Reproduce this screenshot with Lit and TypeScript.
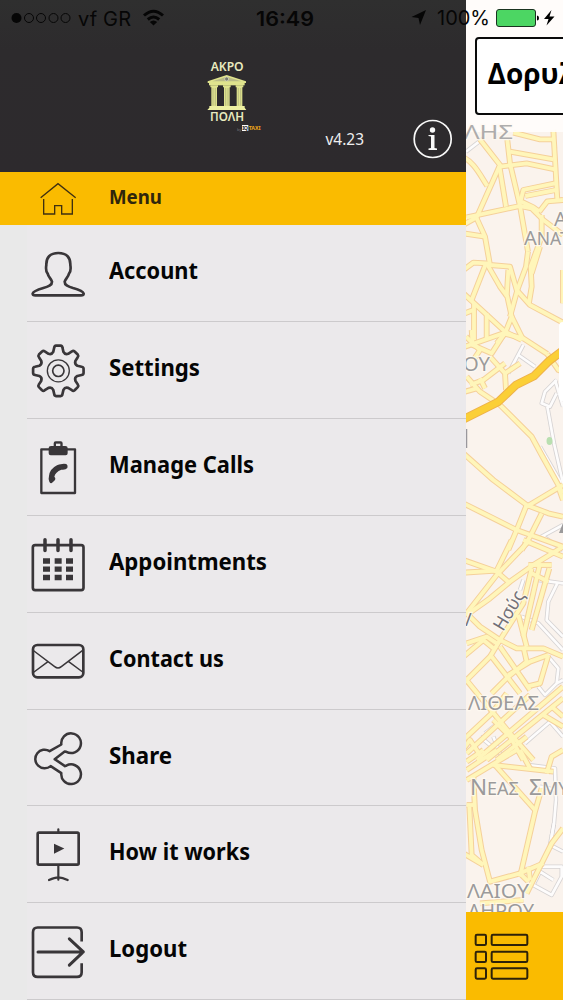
import { LitElement, html, css, svg } from "lit";
import { customElement } from "lit/decorators.js";

interface Tile { y: number; yellow: string[]; minor: string[]; }

// Street tiles, each drawn at three units per pixel.
const tiles: Tile[] = [
  {
    y: 120,
    yellow: [
      "M60 58 L120 135 L50 292 L0 320", "M0 108 C40 120 60 165 82 198", "M118 138 L138 260", "M142 60 L150 130 L180 258 L204 395",
      "M150 95 L280 118", "M120 140 L200 130 L285 148", "M160 38 L240 58 H280", "M280 30 L292 240",
      "M20 292 L180 258 L215 265 L250 300 L309 345", "M180 250 L190 210 L285 190", "M196 228 L288 210", "M238 275 L262 244 L309 240",
      "M245 285 V350 L212 440 L215 500 L207 548", "M204 395 L198 440 L172 510 L150 590", "M50 295 L75 350 L90 435 L150 440 L170 510 L210 555 L309 608",
      "M10 340 L75 350", "M10 450 L40 428 L80 430 L120 500 L142 530 L155 590 L135 640 L110 670", "M78 430 L35 540", "M145 450 L140 530",
      "M10 520 L70 575 L135 635 L185 660", "M42 550 V660", "M80 580 V660", "M155 590 L190 660", "M15 580 L40 570 M309 450 V550",
      "M238 275 L220 262 L185 245", "M240 380 L215 460",
    ],
    minor: ["M18 95 L70 55"],
  },
  {
    y: 330,
    yellow: [
      "M35 0 L38 45 L95 70 L140 0", "M15 50 L130 10 L190 25 L262 72", "M18 20 L60 60 L40 90", "M262 72 L295 120 L309 125", "M90 80 L135 130 L138 180",
      "M30 165 L70 150 L135 100", "M20 140 L60 185 L120 225 L215 320 L245 375 L309 490", "M15 185 L50 175 M60 145 L75 175",
      "M10 370 L100 450 L200 525 L265 550 L309 560", "M10 520 L100 565 L170 600 L309 650", "M200 530 L309 465", "M200 525 L170 600 L145 660",
      "M245 550 L210 620 L185 660", "M295 470 L309 510", "M135 130 L180 100",
    ],
    minor: ["M145 130 L190 45", "M175 75 L225 110", "M290 150 L255 185 L245 220 L270 230 L290 190 M262 230 L282 340 L309 460", "M240 350 L309 470", "M235 625 L309 585 M250 620 L309 660", "M285 150 L309 230"],
  },
  {
    y: 540,
    yellow: [
      "M10 60 L110 95 L150 130", "M10 98 L110 92 L155 0", "M20 220 L110 105 L210 0", "M20 225 L90 175 L150 125 L220 75 L309 20", "M190 0 L309 50",
      "M215 85 L190 190 L120 300 L90 350 L10 430", "M240 70 L190 290", "M268 85 L215 270", "M205 75 H275", "M215 100 L265 125",
      "M20 220 L60 260 L120 300 L170 325 L250 325 L309 350", "M20 310 L80 290 L110 310", "M10 350 L70 300 L100 325", "M95 350 L180 460 M120 320 L210 450",
      "M190 320 L200 365 L145 410 L95 460", "M145 405 L210 365 L265 345", "M265 345 L240 430 L200 440", "M15 415 L150 580 L220 660",
      "M10 600 L95 520 L140 460", "M100 540 L150 590 L190 660", "M20 640 L150 520 L210 465", "M50 660 L309 440", "M80 660 L309 475", "M110 660 L200 590",
      "M250 525 L309 560", "M275 500 L309 530", "M175 225 L200 320", "M0 640 L30 600 L70 660",
    ],
    minor: ["M185 230 L235 250 L309 330", "M190 120 L180 150", "M235 120 L309 130", "M292 130 L265 185 L260 240 L309 290", "M265 350 L295 385 L290 430 L255 465 L235 440", "M290 430 L309 420", "M75 580 L150 520", "M60 590 L120 640 L100 590", "M195 610 L270 545 L309 590"],
  },
  {
    y: 750,
    yellow: [
      "M20 35 L70 0", "M20 90 L170 0", "M20 60 L110 0", "M100 45 L280 65", "M105 45 L225 180", "M180 0 L210 55", "M260 70 L275 20 L309 0",
      "M245 115 L225 185 L180 380", "M40 80 L45 180 L65 300 L90 395 L180 370 L250 340", "M20 165 L40 165", "M28 170 L35 315 L70 345", "M10 310 L70 345",
      "M309 235 L275 280 L235 360 L200 430", "M180 370 L205 395", "M60 460 L190 450", "M205 350 L210 390",
    ],
    minor: ["M205 45 L285 55 L288 150 L282 220 L270 285 L309 305", "M282 220 L275 260", "M235 350 L305 350 V380 L275 435 L220 405 L240 365 L280 390", "M240 110 L290 120"],
  },
];

const layer = (kind: "yellow" | "minor", cls: string) => tiles.map(t => svg`
  <g transform="translate(460 ${t.y}) scale(.33333)" class=${cls}>${t[kind].map(d => svg`<path d=${d}></path>`)}</g>`);

@customElement("street-map")
class StreetMap extends LitElement {
  static styles = css`
    :host { display: block; width: 97px; height: 1000px; }
    svg { display: block; }
    path { fill: none; }
    .minor-edge { stroke: #d6d3d3; stroke-width: 13; stroke-linejoin: round; }
    .minor-fill { stroke: #fdfcfc; stroke-width: 8; stroke-linejoin: round; }
    .road-edge { stroke: #f5d09a; stroke-width: 17.5; stroke-linejoin: round; }
    .road-fill { stroke: #fff6ba; stroke-width: 11.5; stroke-linejoin: round; }
    text { font-family: "Noto Sans", sans-serif; fill: #9b9a9b; stroke: #fffaf2; stroke-width: 2.5px; stroke-opacity: .75; paint-order: stroke; }
    .street { fill: #727078; }
  `;
  render() {
    return html`<svg width="97" height="1000" viewBox="466 0 97 1000">
      <rect x="466" width="97" height="1000" fill="#faf3ed"></rect>
      ${layer("minor", "minor-edge")}${layer("minor", "minor-fill")}
      ${layer("yellow", "road-edge")}${layer("yellow", "road-fill")}
      <path d="M460 421 L498 402 L516 385 L534 376 L549 361 L566 348" stroke="#eeb14b" stroke-width="8.5"></path>
      <path d="M460 421 L498 402 L516 385 L534 376 L549 361 L566 348" stroke="#fbcf37" stroke-width="6.5"></path>
      <ellipse cx="549.500" cy="441" rx="3" ry="4" fill="#b9dfb0"></ellipse>
      <path d="M466.500 429 V448" stroke="#99979c" stroke-width="1.500"></path>
      <path d="M563 523 L559 533 H563Z" style="fill:#9b9a9b"></path>
      <rect x="466" width="97" height="132" fill="#fffdfb" opacity=".9"></rect>
      <text x="464" y="139" font-size="20" textLength="49" lengthAdjust="spacingAndGlyphs" opacity=".8">ΛΗΣ</text>
      <text x="554" y="226" font-size="20">Α</text>
      <text x="524" y="245" font-size="20">Α<tspan font-size="17.500">ΝΑΤ</tspan></text>
      <text x="463" y="371" font-size="19.500" textLength="27" lengthAdjust="spacingAndGlyphs">ΟΥ</text>
      <text x="465" y="626" font-size="18" class="street">/</text>
      <text class="street" font-size="18" textLength="43" lengthAdjust="spacingAndGlyphs" transform="translate(503 632) rotate(-59)">Ησύς</text>
      <text x="468" y="710" font-size="20" textLength="71" lengthAdjust="spacingAndGlyphs">ΛΙΘΕΑΣ</text>
      <text x="470" y="795" font-size="22.500">Ν<tspan font-size="18">ΕΑΣ</tspan></text>
      <text x="529" y="795" font-size="22.500">Σ<tspan font-size="18">ΜΥ</tspan></text>
      <text x="467" y="898" font-size="19.500" textLength="62" lengthAdjust="spacingAndGlyphs">ΛΑΙΟΥ</text>
      <text x="468" y="918" font-size="19.500" textLength="66" lengthAdjust="spacingAndGlyphs">ΛΗΡΟΥ</text>
      <rect x="559" y="322" width="12" height="79" rx="4" fill="#fff"></rect>
    </svg>`;
  }
}

const gear = (() => {
  const p = (r: number, deg: number) => {
    const a = (deg * Math.PI) / 180;
    return `${(175 + r * Math.sin(a)).toFixed(1)} ${(437 - r * Math.cos(a)).toFixed(1)}`;
  };
  let d = "";
  for (let k = 0; k < 8; k++) {
    const a = k * 45;
    d += `${k ? "L" : "M"}${p(59, a - 15)} L${p(71, a - 10)} Q${p(76, a - 9)} ${p(76, a - 5)} L${p(76, a + 5)} Q${p(76, a + 9)} ${p(71, a + 10)} L${p(59, a + 15)} Q${p(52, a + 22.5)} ${p(59, a + 30)} `;
  }
  return d + "Z";
})();

const items = [
  { label: "Account", width: 89, top: 0, icon: svg`<path d="M175 84C150 84 138 98 139 120C137 132 138 140 143 146C146 158 153 160 156 170C156 180 148 184 130 189C112 194 100 198 98 206Q98 211 106 211H243Q251 211 251 206C249 198 238 194 219 189C202 184 194 180 194 170C197 160 204 158 207 146C212 140 213 132 211 120C212 98 200 84 175 84Z"/>` },
  { label: "Settings", width: 91, top: 290.5, icon: svg`<path d=${gear}/><circle cx="175" cy="437" r="33" stroke-width="4"/><circle cx="175" cy="437" r="17" stroke-width="5"/>` },
  { label: "Manage Calls", width: 145, top: 581, icon: svg`<path d="M147 672H124V803H225V672H202" stroke-width="7"/><path class="solid" d="M146 668Q146 662 153 662H161V654Q161 648 167 648H182Q188 648 188 654V662H196Q203 662 203 668V684Q203 690 197 690H152Q146 690 146 684Z"/><path d="M168 662V655H181V662Z" fill="#ebe9eb" stroke="none"/><path class="solid" d="M147 752Q149 731 171 720Q178 717 182 717Q190 714 199 716Q205 720 202 728Q198 733 189 733L184 733Q166 740 163 754Q169 760 163 766L158 771Q152 777 148 769Q144 763 147 752Z"/>` },
  { label: "Appointments", width: 158, top: 1.6, icon: svg`<rect x="98.500" y="89" width="152" height="135" rx="7"/><path d="M135 73V105M174 73V105M213 73V105" stroke-width="10.500"/><path d="M129 136.500H150M164 136.500H185M198 136.500H219M129 161H150M164 161H185M198 161H219M129 186H150M164 186H185M198 186H219" stroke-width="16" stroke-linecap="butt"/>` },
  { label: "Contact us", width: 115, top: 292, icon: svg`<rect x="99" y="388" width="151" height="97" rx="13"/><path d="M102 406L164 453Q174 461 184 453L248 404M102 469L144 438M248 469L206 438" stroke-width="4.500"/>` },
  { label: "Share", width: 63, top: 582.6, icon: svg`<path d="M184 686A29.500 29.500 0 1 1 199 708L194 707L164 730L195 751L200 749A29.500 29.500 0 1 1 184 772L152 751A28 28 0 1 1 149 706Z" stroke-width="7.500"/>` },
  { label: "How it works", width: 141, top: 168, icon: svg`<rect x="113" y="248" width="123" height="96" rx="4"/><path d="M175 238V247M175 347V389M147 390Q164 382 175 382Q187 382 203 390" stroke-width="6.500"/><path class="solid" d="M162 281L193 295.500L162 311Z"/>` },
  { label: "Logout", width: 78, top: 458.6, icon: svg`<path d="M245 574V546Q245 532 231 532H113Q99 532 99 546V666Q99 680 113 680H231Q245 680 245 666V639" stroke-linecap="butt"/><path d="M114 605.500H249M208 566L250 605.500L208 645" stroke-width="9"/>` },
];

@customElement("status-bar")
class StatusBar extends LitElement {
  static styles = css`
    :host { display: flex; align-items: center; width: 563px; height: 36px; font-family: Inter, sans-serif; font-size: 20px; color: #060606; }
    svg { display: block; }
    .carrier { width: 246px; }
    .clock { width: 149px; }
    .power { width: 168px; }
    .bold { font-weight: 600; }
  `;
  render() {
    return html`
      <svg class="carrier" height="36" viewBox="0 0 246 36" fill="none" stroke="#060606">
        <circle cx="16.500" cy="18" r="5" fill="#060606" stroke="none"></circle>
        ${[29, 41, 53.5, 65.5].map(x => svg`<circle cx=${x} cy="18" r="4.500" stroke-width="1"></circle>`)}
        <text x="78" y="25.500" fill="#060606" stroke="none" textLength="53">vf GR</text>
        <path d="M144 15.500Q153.500 7 163 15.500M147.800 19.500Q153.500 14.500 159.200 19.500" stroke-width="3"></path>
        <path d="M149.800 22Q153.500 19 157.200 22L153.500 25.500Z" fill="#060606" stroke="none"></path>
      </svg>
      <svg class="clock" height="36" viewBox="246 0 149 36"><text class="bold" x="256" y="25.500" textLength="58" lengthAdjust="spacingAndGlyphs" fill="#060606">16:49</text></svg>
      <svg class="power" height="36" viewBox="395 0 168 36">
        <path d="M426 10L411.500 17L418.500 18L420 25Z" fill="#060606"></path>
        <text x="437" y="25" textLength="53" fill="#060606">100%</text>
        <rect x="496.500" y="9.500" width="39" height="17" rx="2.500" fill="#4cd663" stroke="#1a3320"></rect>
        <path d="M537 15.500Q539 15.500 539 18T537 20.500Z"></path>
        <path d="M551.500 10L544 19H548.500L546.500 25.500L554.500 16.500H549.500Z"></path>
      </svg>`;
  }
}

@customElement("app-root")
class AppRoot extends LitElement {
  static styles = css`
    :host { display: block; width: 563px; height: 1000px; overflow: hidden; position: relative; font-family: "Noto Sans", sans-serif; }
    svg { display: block; }
    .screen { display: grid; grid-template-columns: 466px 97px; height: 1000px; }
    .drawer { display: flex; flex-direction: column; background: #e9e9e9; height: 1000px; overflow: hidden; }
    .header { display: flex; flex: none; height: 172.400px; background: linear-gradient(#2f2f2f, #2d2b2d 50px, #2d2a2d); }
    .logo { margin: 50px 0 0 195px; }
    .version { margin: 128px 0 0 50px; width: 88px; height: 22px; color: #eee; }
    .info { margin-top: 119px; }
    .current { display: flex; flex: none; height: 53px; background: #fabb00; }
    .home { margin: 9px 0 0 38px; }
    .current svg.menu { margin: 0 0 0 31px; }
    .item { display: flex; flex: none; height: 96.840px; }
    .cell { display: flex; flex: 1; margin-left: 27px; box-sizing: border-box; background: #ebe9eb; border-bottom: 1px solid #cccacc; }
    .icon { margin-left: 1px; fill: none; stroke: #393639; stroke-width: 8; stroke-linecap: round; stroke-linejoin: round; }
    .icon .solid { fill: #393639; stroke: none; }
    .label { margin-left: 21px; }
    .label text { font-weight: 700; font-size: 22.300px; fill: #050505; }
    .side { position: relative; overflow: hidden; }
    .address { position: absolute; left: 9px; top: 37px; width: 120px; height: 78px; box-sizing: border-box; border: 2px solid #0a0a0a; border-radius: 4px; background: #fff; }
    .list { position: absolute; left: 0; top: 912px; width: 97px; height: 88px; background: #fabb00; }
    .status { position: absolute; left: 0; top: 0; }
  `;
  render() {
    return html`
      <div class="screen">
        <div class="drawer">
          <div class="header">
            <svg class="logo" width="80" height="90" viewBox="0 0 240 270">
              <g fill="#e9ebbf" font-weight="600" font-size="35">
                <text x="47" y="62" textLength="99" lengthAdjust="spacingAndGlyphs">ΑΚΡΟ</text>
                <text x="45" y="214" textLength="102" lengthAdjust="spacingAndGlyphs">ΠΟΛΗ</text>
              </g>
              <g fill="#dfe38d">
                <path d="M38 94L95 75L153 94V99H38Z"></path><rect x="42" y="99" width="107" height="7"></rect>
                <path d="M46 106H69V112H66V168H49V112H46ZM84 106H107V112H104V168H87V112H84ZM122 106H145V112H142V168H125V112H122Z"></path>
                <path d="M43 168H149V173L154 180H37L43 173Z" fill="#edf0a1"></path>
              </g>
              <path d="M52 94L95 80L139 94Z" fill="#b9bb86"></path>
              <path d="M54 114V167M61 114V167M92 114V167M99 114V167M130 114V167M137 114V167" stroke="#a9ab79" stroke-width="2"></path>
              <circle cx="95" cy="87" r="6" fill="#777b6d" stroke="#dfe0cb" stroke-width="2"></circle>
              <g font-weight="700" font-size="16"><text x="126" y="242" font-size="12" fill="#77777a" font-weight="400">by</text>
              <rect x="141" y="225" width="19" height="18" fill="#fafafa"></rect><text x="142" y="240" fill="#29272a" textLength="17">IQ</text>
              <text x="161" y="240" fill="#f0a718" textLength="36" lengthAdjust="spacingAndGlyphs">TAXI</text></g>
            </svg>
            <svg class="version"><text x="0.500" y="16.500" font-size="17" fill="#eee" textLength="38.500" lengthAdjust="spacingAndGlyphs">v4.23</text></svg>
            <svg class="info" width="40" height="40" viewBox="0 0 40 40" fill="#f8f8f8">
              <circle cx="19.700" cy="20" r="18.500" fill="none" stroke="#f8f8f8" stroke-width="1.700"></circle>
              <circle cx="19.500" cy="11" r="2.700"></circle><path d="M15.500 16H21.500V29L24 29.500V31H15.500V29.500L18 29V17.500L15.500 17Z"></path>
            </svg>
          </div>
          <div class="current">
            <svg class="home" width="40" height="36" viewBox="114 543 120 108" fill="none" stroke="#3f3010" stroke-width="4">
              <path d="M122 593L174 551L227 593M131 597V642H164V617H185V642H217V597"></path>
            </svg>
            <svg class="menu" width="100" height="52"><text x="0" y="32" font-weight="700" font-size="19.500" fill="#2f260c" textLength="53" lengthAdjust="spacingAndGlyphs">Menu</text></svg>
          </div>
          ${items.map(i => html`<div class="item"><div class="cell">
            <svg class="icon" width="60" height="96" viewBox="84 ${i.top} 180 288">${i.icon}</svg>
            <svg class="label" width="200" height="90"><text x="0" y="54" textLength=${i.width} lengthAdjust="spacingAndGlyphs">${i.label}</text></svg>
          </div></div>`)}
        </div>
        <div class="side">
          <street-map></street-map>
          <div class="address"><svg width="100" height="74"><text x="10.500" y="44.500" font-family="Open Sans" font-weight="700" font-size="28">Δορυλαίου</text></svg></div>
          <div class="list"><svg width="97" height="88" viewBox="18 486 291 264" fill="none" stroke="#2e2208" stroke-width="6">
            ${[554, 605, 655].map(y => svg`<rect x="47" y=${y} width="31" height="31" rx="4"/><rect x="95" y=${y} width="107" height="31" rx="4"/>`)}
          </svg></div>
        </div>
      </div>
      <status-bar class="status"></status-bar>`;
  }
}
